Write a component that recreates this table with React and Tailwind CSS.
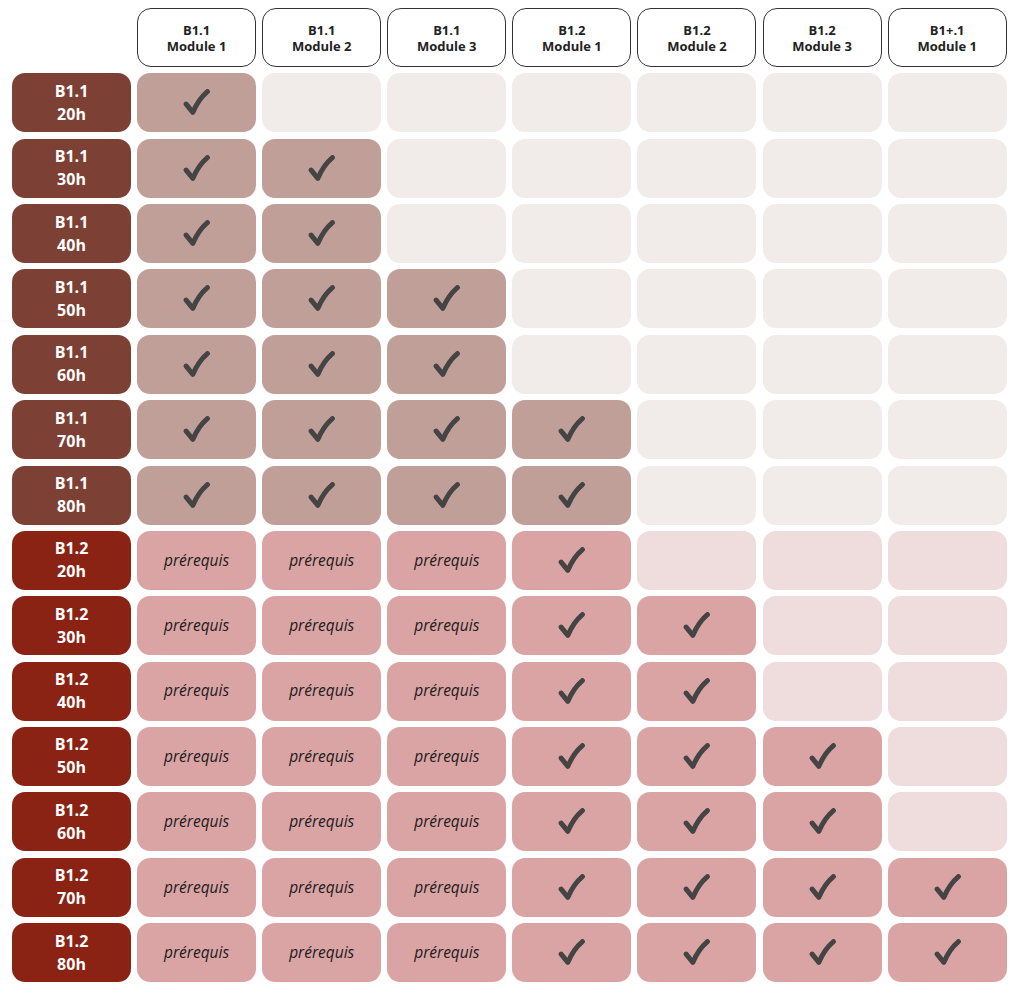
const cols = [
  ["B1.1", "Module 1"],
  ["B1.1", "Module 2"],
  ["B1.1", "Module 3"],
  ["B1.2", "Module 1"],
  ["B1.2", "Module 2"],
  ["B1.2", "Module 3"],
  ["B1+.1", "Module 1"],
];

// each row: level, hours, how many columns are done (B1.2 rows: first 3 are prérequis)
const rows = [
  ["B1.1", "20h", 1],
  ["B1.1", "30h", 2],
  ["B1.1", "40h", 2],
  ["B1.1", "50h", 3],
  ["B1.1", "60h", 3],
  ["B1.1", "70h", 4],
  ["B1.1", "80h", 4],
  ["B1.2", "20h", 4],
  ["B1.2", "30h", 5],
  ["B1.2", "40h", 5],
  ["B1.2", "50h", 6],
  ["B1.2", "60h", 6],
  ["B1.2", "70h", 7],
  ["B1.2", "80h", 7],
];

const Check = () => (
  <svg width="27" height="27" viewBox="0 0 26 26" fill="none">
    <path
      d="M3 14.5 L9.5 22.5 C13 14 17 8 23.5 2.5"
      stroke="#444444"
      strokeWidth="4.8"
      strokeLinecap="round"
      strokeLinejoin="round"
    />
  </svg>
);

const Cell = ({ level, state }) => {
  const b11 = level === "B1.1";
  let bg;
  if (state === "empty") bg = b11 ? "bg-[#f1ebe9]" : "bg-[#efdcdc]";
  else bg = b11 ? "bg-[#c19f99]" : "bg-[#daa4a4]";
  return (
    <div className={`${bg} rounded-[13px] flex items-center justify-center`}>
      {state === "check" && <Check />}
      {state === "pre" && (
        <span className="italic text-[15.5px] text-[#1c1c1c]">prérequis</span>
      )}
    </div>
  );
};

export default function App() {
  return (
    <div
      className="bg-white w-[1024px] h-[994px] pl-[12px] pt-[8px]"
      style={{ fontFamily: '"Open Sans", "Noto Sans", sans-serif' }}
    >
      <div className="grid grid-cols-[repeat(8,119px)] auto-rows-[59px] gap-x-[6.1px] gap-y-[6.36px]">
        <div />
        {cols.map(([a, b], i) => (
          <div
            key={i}
            className="border-[1.4px] border-[#333] rounded-[14px] bg-white flex flex-col items-center justify-center text-[13px] leading-[16px] font-bold text-[#222]"
          >
            <span>{a}</span>
            <span>{b}</span>
          </div>
        ))}
        {rows.map(([level, hours, done], r) => {
          const b11 = level === "B1.1";
          return [
            <div
              key={`l${r}`}
              className={`${b11 ? "bg-[#7d4034]" : "bg-[#8b2315]"} rounded-[13px] flex flex-col items-center justify-center text-white font-bold text-[16px] leading-[23px]`}
            >
              <span>{level}</span>
              <span>{hours}</span>
            </div>,
            ...cols.map((_, c) => {
              let state = "empty";
              if (c < done) state = !b11 && c < 3 ? "pre" : "check";
              return <Cell key={`c${r}-${c}`} level={level} state={state} />;
            }),
          ];
        })}
      </div>
    </div>
  );
}
